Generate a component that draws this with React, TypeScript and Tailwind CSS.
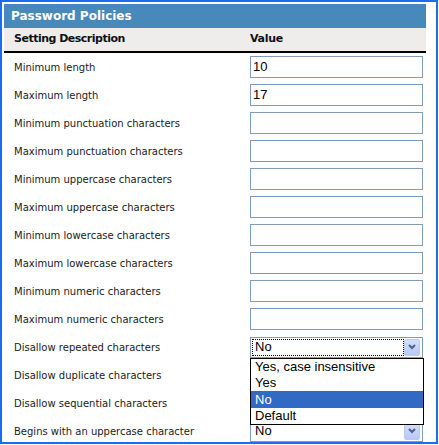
import React from "react";

const labelFont = { fontFamily: '"DejaVu Sans", Verdana, sans-serif' };

type Row = { label: string; kind: "input" | "select"; value?: string; open?: boolean };

const rows: Row[] = [
  { label: "Minimum length", kind: "input", value: "10" },
  { label: "Maximum length", kind: "input", value: "17" },
  { label: "Minimum punctuation characters", kind: "input" },
  { label: "Maximum punctuation characters", kind: "input" },
  { label: "Minimum uppercase characters", kind: "input" },
  { label: "Maximum uppercase characters", kind: "input" },
  { label: "Minimum lowercase characters", kind: "input" },
  { label: "Maximum lowercase characters", kind: "input" },
  { label: "Minimum numeric characters", kind: "input" },
  { label: "Maximum numeric characters", kind: "input" },
  { label: "Disallow repeated characters", kind: "select", value: "No", open: true },
  { label: "Disallow duplicate characters", kind: "select" },
  { label: "Disallow sequential characters", kind: "select" },
  { label: "Begins with an uppercase character", kind: "select", value: "No" },
];

function Arrow() {
  return (
    <div className="absolute right-[2px] top-[1px] w-[16px] h-[17px] rounded-[2px] border border-[#b9cbf3] bg-gradient-to-b from-[#d2defc] to-[#b6c9f7] flex items-center justify-center">
      <svg width="8" height="6" viewBox="0 0 8 6">
        <polyline points="1,1 4,4 7,1" fill="none" stroke="#4d6185" strokeWidth="2" />
      </svg>
    </div>
  );
}

function Select({ value, open }: { value?: string; open?: boolean }) {
  return (
    <div className="relative w-[173px] h-[21px] border border-[#7f9db9] bg-white">
      <div
        className={
          "absolute left-[1px] top-[1px] h-[17px] w-[152px] flex items-center pl-[3px] text-[13px] text-black " +
          (open ? "outline outline-1 outline-dotted outline-black -outline-offset-1" : "")
        }
        style={{ fontFamily: '"Liberation Sans", Arial, sans-serif' }}
      >
        {value}
      </div>
      <Arrow />
      {open && (
        <div
          className="absolute left-[-1px] top-[20px] w-[174px] border border-black bg-white z-10 text-[13px] text-black"
          style={{ fontFamily: '"Liberation Sans", Arial, sans-serif' }}
        >
          <div className="h-[16px] leading-[16px] pl-[4px]">Yes, case insensitive</div>
          <div className="h-[16px] leading-[16px] pl-[4px]">Yes</div>
          <div className="h-[17px] leading-[17px] pl-[4px] bg-[#316ac5] text-white">No</div>
          <div className="h-[16px] leading-[16px] pl-[4px]">Default</div>
        </div>
      )}
    </div>
  );
}

export default function App() {
  return (
    <div className="w-[439px] h-[445px] bg-white">
      <div className="w-[438px] h-[444px] border-2 border-[#1a6cf2] pt-[2px] pl-[2px]">
        <div className="w-[422px]">
          <div
            className="h-[24px] bg-[#4689ba] text-white font-bold text-[12px] pl-[7px] flex items-center"
            style={labelFont}
          >
            Password Policies
          </div>
          <div
            className="h-[25px] bg-[#eeedeb] border-b-2 border-black grid grid-cols-[246px_1fr] items-center text-[11px] font-bold text-[#111]"
            style={labelFont}
          >
            <div className="pl-[10px] tracking-[-0.5px]">Setting Description</div>
            <div className="tracking-[-0.3px]">Value</div>
          </div>
          {rows.map((r, i) => (
            <div key={i} className="h-[28px] grid grid-cols-[246px_1fr] items-center">
              <div className="pl-[10px] text-[10px] text-[#1a1a1a]" style={labelFont}>
                {r.label}
              </div>
              <div>
                {r.kind === "input" ? (
                  <div
                    className="w-[173px] h-[22px] border border-[#7f9db9] bg-white pl-[2px] flex items-center text-[13px] text-black"
                    style={{ fontFamily: '"Liberation Sans", Arial, sans-serif' }}
                  >
                    {r.value}
                  </div>
                ) : (
                  <Select value={r.value} open={r.open} />
                )}
              </div>
            </div>
          ))}
        </div>
      </div>
    </div>
  );
}
